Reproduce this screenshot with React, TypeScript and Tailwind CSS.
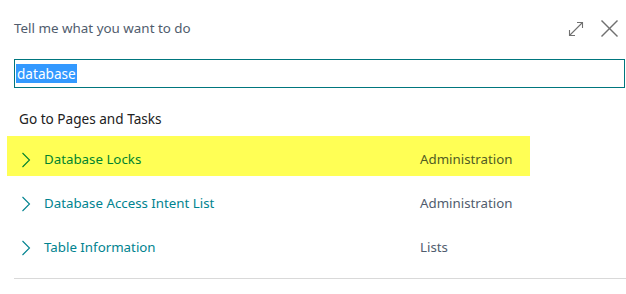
const rows = [
  { name: 'Database Locks', category: 'Administration', highlighted: true },
  { name: 'Database Access Intent List', category: 'Administration', highlighted: false },
  { name: 'Table Information', category: 'Lists', highlighted: false },
];

function Chevron({ color }: { color: string }) {
  return (
    <svg width="10" height="16" viewBox="0 0 10 16" className="shrink-0">
      <path d="M1.5 1 L8.5 8 L1.5 15" fill="none" stroke={color} strokeWidth="1.1" />
    </svg>
  );
}

export default function App() {
  return (
    <div className="w-[626px] h-[294px] bg-white overflow-hidden" style={{ fontFamily: '"Noto Sans", "Open Sans", sans-serif' }}>
      {/* Header */}
      <div className="flex items-center justify-between pl-[14px] pr-[8px] h-[57px]">
        <span className="text-[13.4px] text-[#505c6d]">Tell me what you want to do</span>
        <div className="flex items-center gap-[17px]">
          <svg width="16" height="16" viewBox="0 0 16 16">
            <g fill="none" stroke="#707070" strokeWidth="1.1">
              <path d="M1.5 14.5 L14.5 1.5" />
              <path d="M9 1.5 L14.5 1.5 L14.5 7" />
              <path d="M1.5 9 L1.5 14.5 L7 14.5" />
            </g>
          </svg>
          <svg width="17" height="17" viewBox="0 0 17 17">
            <g fill="none" stroke="#707070" strokeWidth="1.4">
              <path d="M0.5 0.5 L16.5 16.5" />
              <path d="M16.5 0.5 L0.5 16.5" />
            </g>
          </svg>
        </div>
      </div>

      {/* Search input */}
      <div className="ml-[14px] mr-[1px] mt-[2px] h-[29px] border border-[#00767e] flex items-center px-[1px]">
        <span className="bg-[#3399ff] text-white text-[13.6px] leading-[19px] px-[1px]">database</span>
      </div>

      {/* Section heading */}
      <div className="pl-[19px] mt-[21px] text-[13.6px] text-[#212121] leading-[20px]">Go to Pages and Tasks</div>

      {/* Results */}
      <div className="mt-[7px]">
        {rows.map((r) => (
          <div
            key={r.name}
            className={`flex items-center h-[40px] pt-[7px] ml-[7px] w-[523px] mb-[4px] ${r.highlighted ? 'bg-[#ffff55]' : ''}`}
          >
            <div className="w-[37px] pl-[14px] flex items-center">
              <Chevron color={r.highlighted ? '#00832f' : '#00838f'} />
            </div>
            <span className={`w-[376px] text-[13.3px] ${r.highlighted ? 'text-[#00832f]' : 'text-[#00838f]'}`}>{r.name}</span>
            <span className={`text-[13.3px] ${r.highlighted ? 'text-[#505c24]' : 'text-[#505c6d]'}`}>{r.category}</span>
          </div>
        ))}
      </div>

      <div className="ml-[14px] mt-[14px] border-t border-[#d9d9d9]" />
    </div>
  );
}
